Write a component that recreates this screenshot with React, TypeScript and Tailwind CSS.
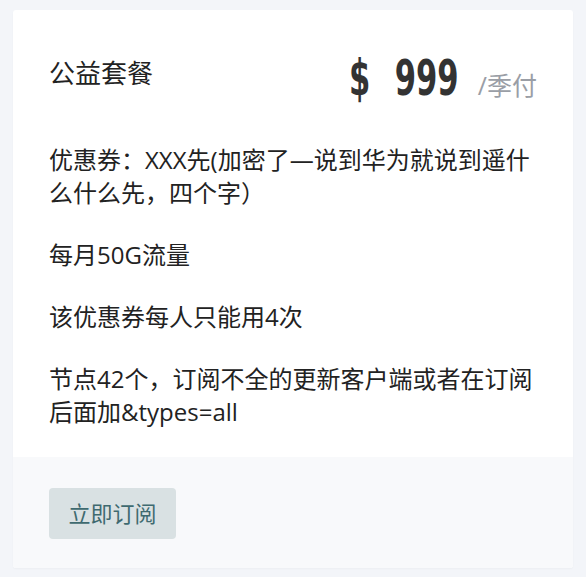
export default function App() {
  const body = '"Open Sans", "Noto Sans CJK SC", sans-serif';
  return (
    <div className="min-h-[577px] w-[586px] bg-[#f3f5f9] pt-[10px] pl-[13px] pr-[13px] pb-[10px]" style={{ fontFamily: body }}>
      <div className="bg-white rounded-[3px] overflow-hidden shadow-[0_1px_2px_rgba(0,0,0,0.03)]">
        <div className="px-9 pt-[40px] pb-[29px]">
          <div className="flex items-start justify-between">
            <div className="text-[26px] leading-[46px] text-[#222]">公益套餐</div>
            <div className="flex items-baseline">
              <span className="inline-block w-[111px] whitespace-nowrap text-[50px] leading-[56px] font-bold text-[#333]" style={{ fontFamily: '"DejaVu Sans Condensed", "DejaVu Sans", sans-serif' }}>
                <span className="inline-block origin-left scale-x-[0.68]">
                  $<span className="ml-[36px]">999</span>
                </span>
              </span>
              <span className="ml-[18px] text-[25px] text-[#9a9ea6]">/季付</span>
            </div>
          </div>
          <div className="mt-[37px] text-[24px] leading-[33px] text-[#222] flex flex-col gap-[29px]">
            <p>优惠券：XXX先(加密了—说到华为就说到遥什么什么先，四个字）</p>
            <p>每月50G流量</p>
            <p>该优惠券每人只能用4次</p>
            <p>节点42个，订阅不全的更新客户端或者在订阅后面加&amp;types=all</p>
          </div>
        </div>
        <div className="bg-[#f8f9fb] px-9 pt-[31px] pb-[29px]">
          <button className="h-[51px] w-[127px] rounded-[4px] bg-[#d9e1e3] text-[22px] text-[#3f6a70]">立即订阅</button>
        </div>
      </div>
    </div>
  );
}
